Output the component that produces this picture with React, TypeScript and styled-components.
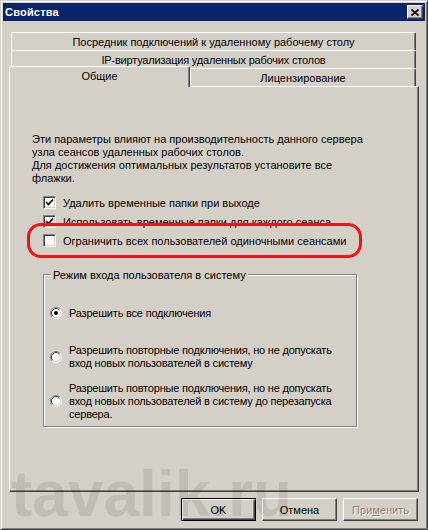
import React from "react";
import styled, { createGlobalStyle } from "styled-components";

const GlobalStyle = createGlobalStyle`
  html, body { margin: 0; padding: 0; background: #d4d0c8; }
  body {
    font-family: Tahoma, "Liberation Sans", Arial, sans-serif;
    font-size: 11px;
    color: #000;
  }
  * { box-sizing: border-box; }
`;

const Window = styled.div`
  position: relative;
  width: 428px;
  height: 530px;
  background: #d4d0c8;
  border: 1px solid;
  border-color: #d4d0c8 #404040 #404040 #d4d0c8;
  box-shadow: inset 1px 1px 0 #fff, inset -1px -1px 0 #808080;
  padding: 2px;
  display: flex;
  flex-direction: column;
  overflow: hidden;
`;

const TitleBar = styled.div`
  height: 18px;
  flex: none;
  background: #0a246a;
  display: flex;
  align-items: center;
  justify-content: space-between;
  padding: 0 2px 0 2px;
`;

const TitleText = styled.span`
  color: #fff;
  font-weight: bold;
  font-size: 11px;
  letter-spacing: 0.2px;
`;

const CloseButton = styled.div`
  width: 16px;
  height: 14px;
  background: #d4d0c8;
  border: 1px solid;
  border-color: #fff #404040 #404040 #fff;
  box-shadow: inset -1px -1px 0 #808080;
  display: flex;
  align-items: center;
  justify-content: center;
`;

const TabArea = styled.div`
  margin: 11px 6px 0 6px;
  display: flex;
  flex-direction: column;
`;

const TabRow = styled.div<{ $front?: boolean }>`
  display: flex;
  align-items: flex-start;
  height: 18px;
  margin: ${(p) => (p.$front ? "0 3px 0 0" : "0 3px 0 2px")};
`;

const Tab = styled.div<{ $active?: boolean; $width?: number; $spacing?: number }>`
  position: relative;
  z-index: ${(p) => (p.$active ? 2 : 1)};
  flex: ${(p) => (p.$width ? `0 0 ${p.$width}px` : "1 1 auto")};
  height: ${(p) => (p.$active ? "21px" : "18px")};
  margin-top: ${(p) => (p.$active ? "-2px" : "0")};
  padding-bottom: ${(p) => (p.$active ? "3px" : "0")};
  display: flex;
  align-items: center;
  justify-content: center;
  background: #d4d0c8;
  border-top: 1px solid #fff;
  border-left: 1px solid #fff;
  border-right: 1px solid #404040;
  box-shadow: inset -1px 0 0 #808080;
  border-radius: 2px 2px 0 0;
  white-space: nowrap;
  letter-spacing: ${(p) => p.$spacing ?? 0}px;
`;

const Panel = styled.div`
  height: 406px;
  flex: none;
  margin: 0 6px;
  border: 1px solid;
  border-color: #fff #404040 #404040 #fff;
  box-shadow: inset -1px -1px 0 #808080;
  padding: 46px 10px 0 22px;
  display: flex;
  flex-direction: column;
`;

const Intro = styled.p`
  margin: 0;
  line-height: 13px;
`;

const CheckList = styled.div`
  margin: 8px 0 0 11px;
  display: flex;
  flex-direction: column;
`;

const CheckRow = styled.div`
  position: relative;
  height: 19px;
  display: flex;
  align-items: center;
  gap: 7px;
`;

const CheckBox = styled.span`
  width: 13px;
  height: 13px;
  flex: none;
  background: #fff;
  border: 1px solid;
  border-color: #808080 #fff #fff #808080;
  box-shadow: inset 1px 1px 0 #404040, inset -1px -1px 0 #d4d0c8;
  display: flex;
  align-items: center;
  justify-content: center;
`;

const Highlight = styled.div`
  position: absolute;
  left: -16px;
  top: -8px;
  width: 335px;
  height: 35px;
  border: 3px solid #ee1414;
  border-radius: 14px;
  pointer-events: none;
`;

const Group = styled.div`
  position: relative;
  margin: 24px 0 0 11px;
  width: 314px;
  height: 153px;
  border: 1px solid #808080;
  box-shadow: 1px 1px 0 #fff, inset 1px 1px 0 #fff;
  padding: 16px 0 3px 6px;
  display: flex;
  flex-direction: column;
`;

const Legend = styled.span`
  position: absolute;
  top: -6px;
  left: 7px;
  padding: 0 2px;
  background: #d4d0c8;
  line-height: 13px;
`;

const RadioRow = styled.div`
  height: 44px;
  display: flex;
  align-items: center;
  gap: 7px;
`;

const RadioLabel = styled.span`
  line-height: 13px;
  letter-spacing: -0.2px;
`;

const Footer = styled.div`
  display: flex;
  justify-content: flex-end;
  gap: 6px;
  margin: 6px 7px 0 0;
`;

const Button = styled.div<{ $default?: boolean; $disabled?: boolean }>`
  width: 75px;
  height: 23px;
  display: flex;
  align-items: center;
  justify-content: center;
  background: #d4d0c8;
  border: 1px solid;
  border-color: ${(p) => (p.$default ? "#000" : "#fff #404040 #404040 #fff")};
  box-shadow: ${(p) =>
    p.$default
      ? "inset 1px 1px 0 #fff, inset -1px -1px 0 #404040, inset -2px -2px 0 #808080"
      : "inset -1px -1px 0 #808080"};
  color: ${(p) => (p.$disabled ? "#808080" : "#000")};
  text-shadow: ${(p) => (p.$disabled ? "1px 1px 0 #fff" : "none")};
`;

const Watermark = styled.div`
  position: absolute;
  left: 10px;
  top: 461px;
  font-family: "Liberation Sans", Arial, sans-serif;
  font-weight: bold;
  font-size: 64px;
  line-height: 64px;
  color: rgba(0, 0, 0, 0.09);
  pointer-events: none;
  white-space: nowrap;
`;

const CheckMark = () => (
  <svg width="9" height="9" viewBox="0 0 9 9">
    <polyline points="1,4 3.5,6.5 8,1.5" fill="none" stroke="#000" strokeWidth="1.7" />
  </svg>
);

const Radio = ({ checked }: { checked?: boolean }) => (
  <svg width="12" height="12" viewBox="0 0 12 12" style={{ flex: "none" }}>
    <circle cx="6" cy="6" r="4.5" fill="#fff" />
    <path d="M2.11 9.89 A5.5 5.5 0 0 1 9.89 2.11" fill="none" stroke="#808080" />
    <path d="M9.89 2.11 A5.5 5.5 0 0 1 2.11 9.89" fill="none" stroke="#fff" />
    <path d="M2.82 9.18 A4.5 4.5 0 0 1 9.18 2.82" fill="none" stroke="#404040" />
    <path d="M9.18 2.82 A4.5 4.5 0 0 1 2.82 9.18" fill="none" stroke="#d4d0c8" />
    {checked && <circle cx="6" cy="6" r="2" fill="#000" />}
  </svg>
);

const CloseGlyph = () => (
  <svg width="8" height="7" viewBox="0 0 8 7">
    <path d="M0.5 0.5 L7.5 6.5 M7.5 0.5 L0.5 6.5" stroke="#000" strokeWidth="1.6" fill="none" />
  </svg>
);

export default function App() {
  return (
    <>
      <GlobalStyle />
      <Window>
        <TitleBar>
          <TitleText>Свойства</TitleText>
          <CloseButton>
            <CloseGlyph />
          </CloseButton>
        </TitleBar>
        <TabArea>
          <TabRow>
            <Tab>Посредник подключений к удаленному рабочему столу</Tab>
          </TabRow>
          <TabRow>
            <Tab $spacing={-0.2}>IP-виртуализация удаленных рабочих столов</Tab>
          </TabRow>
          <TabRow $front>
            <Tab $active $width={181}>Общие</Tab>
            <Tab>Лицензирование</Tab>
          </TabRow>
        </TabArea>
        <Panel>
          <Intro>
            Эти параметры влияют на производительность данного сервера
            <br />
            узла сеансов удаленных рабочих столов.
            <br />
            Для достижения оптимальных результатов установите все
            <br />
            флажки.
          </Intro>
          <CheckList>
            <CheckRow>
              <CheckBox>
                <CheckMark />
              </CheckBox>
              Удалить временные папки при выходе
            </CheckRow>
            <CheckRow>
              <CheckBox>
                <CheckMark />
              </CheckBox>
              Использовать временные папки для каждого сеанса
            </CheckRow>
            <CheckRow>
              <CheckBox />
              Ограничить всех пользователей одиночными сеансами
              <Highlight />
            </CheckRow>
          </CheckList>
          <Group>
            <Legend>Режим входа пользователя в систему</Legend>
            <RadioRow>
              <Radio checked />
              <RadioLabel>Разрешить все подключения</RadioLabel>
            </RadioRow>
            <RadioRow>
              <Radio />
              <RadioLabel>
                Разрешить повторные подключения, но не допускать
                <br />
                вход новых пользователей в систему
              </RadioLabel>
            </RadioRow>
            <RadioRow>
              <Radio />
              <RadioLabel>
                Разрешить повторные подключения, но не допускать
                <br />
                вход новых пользователей в систему до перезапуска
                <br />
                сервера.
              </RadioLabel>
            </RadioRow>
          </Group>
        </Panel>
        <Footer>
          <Button $default>OK</Button>
          <Button>Отмена</Button>
          <Button $disabled>
            При<u>м</u>енить
          </Button>
        </Footer>
        <Watermark>tavalik.ru</Watermark>
      </Window>
    </>
  );
}
